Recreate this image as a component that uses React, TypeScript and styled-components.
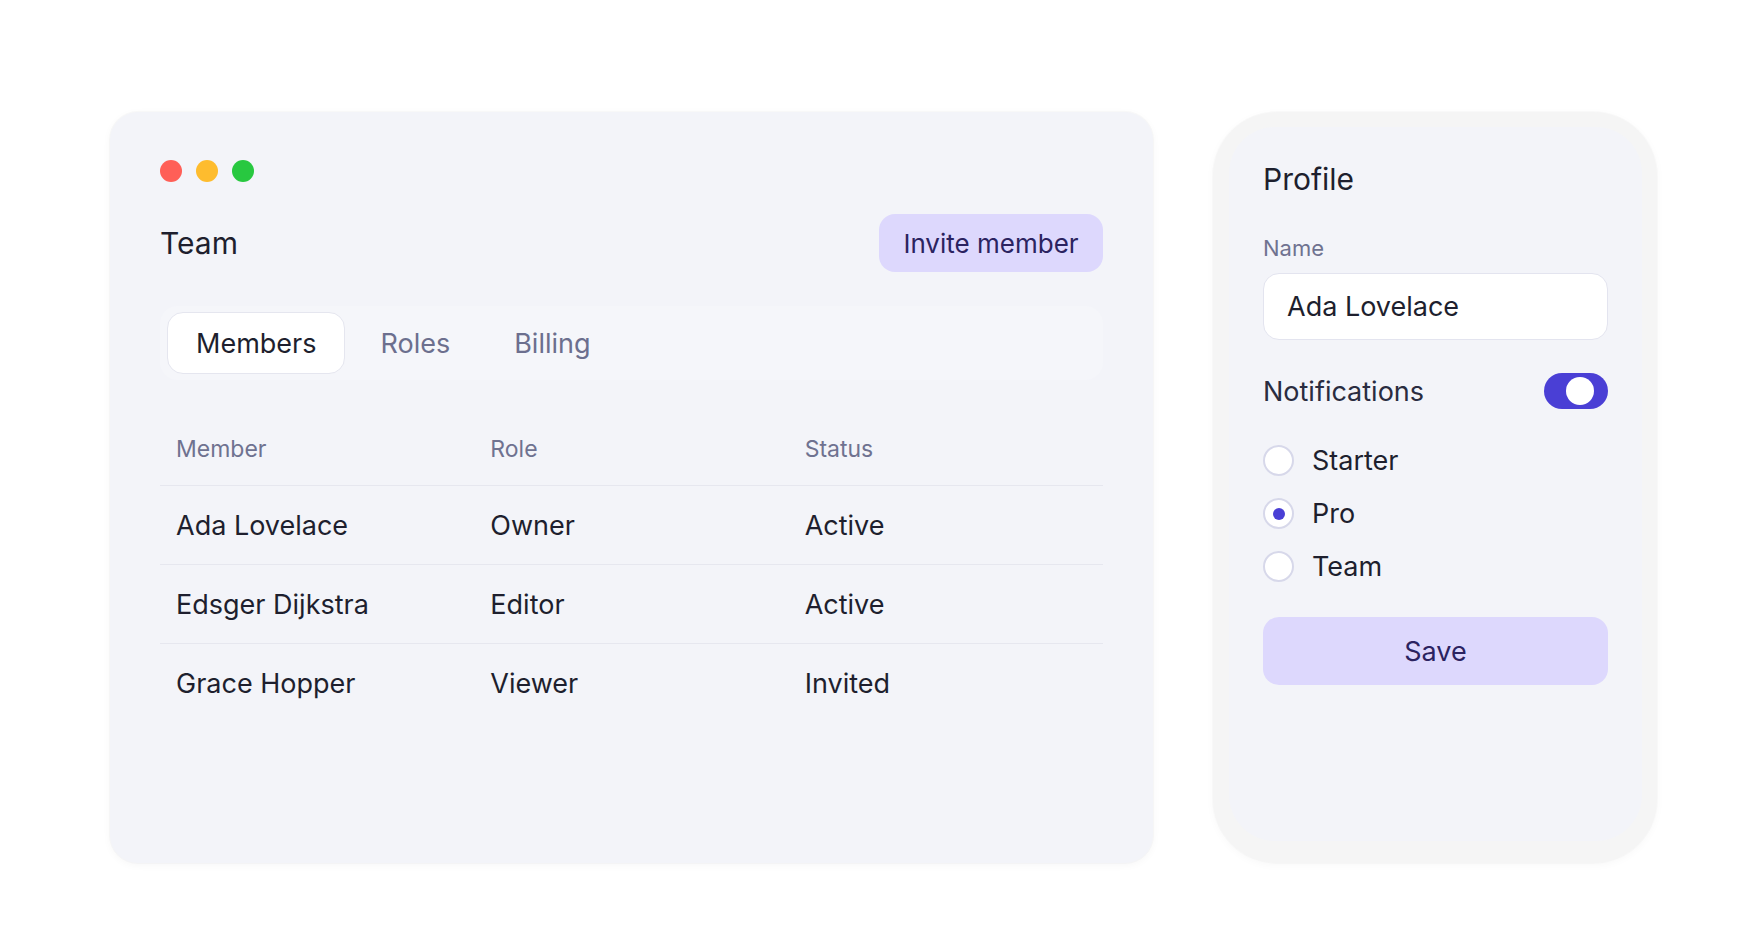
import React from "react";
import styled, { createGlobalStyle } from "styled-components";

const GlobalStyle = createGlobalStyle`
  * { box-sizing: border-box; }
  html, body { margin: 0; padding: 0; background: #ffffff; }
  body {
    font-family: "Inter", "Noto Sans", sans-serif;
    color: #1e1f2e;
    -webkit-font-smoothing: antialiased;
  }
`;

const Page = styled.main`
  display: flex;
  align-items: flex-start;
  gap: 60px;
  width: 1760px;
  height: 940px;
  padding: 112px 0 0 110px;
`;

/* ---------- Team window ---------- */

const TeamCard = styled.section`
  display: flex;
  flex-direction: column;
  flex: none;
  width: 1043px;
  height: 751px;
  padding: 48px 50px 48px 50px;
  background: #f3f4f9;
  border-radius: 28px;
  box-shadow: 0 0 0 1px rgba(30, 30, 60, 0.025), 0 2px 8px rgba(30, 30, 60, 0.04);
`;

const WindowDots = styled.div`
  display: flex;
  gap: 14px;
  height: 22px;
`;

const Dot = styled.span<{ $color: string }>`
  width: 22px;
  height: 22px;
  border-radius: 50%;
  background: ${(p) => p.$color};
`;

const HeaderRow = styled.div`
  display: flex;
  align-items: center;
  justify-content: space-between;
  height: 58px;
  margin-top: 32px;
`;

const Title = styled.h1`
  margin: 0;
  font-size: 30px;
  line-height: 36px;
  font-weight: 400;
  color: #1e1f2e;
`;

const SoftButton = styled.button`
  display: flex;
  align-items: center;
  justify-content: center;
  border: none;
  border-radius: 16px;
  background: #ddd8fd;
  color: #2b2360;
  font-family: inherit;
  font-weight: 400;
  cursor: pointer;
`;

const InviteButton = styled(SoftButton)`
  width: 224px;
  height: 58px;
  font-size: 26px;
`;

const TabBar = styled.div`
  display: flex;
  align-items: center;
  gap: 6px;
  height: 74px;
  margin-top: 34px;
  padding: 0 7px;
  border-radius: 18px;
  background: #f5f6fa;
`;

const Tab = styled.button<{ $active?: boolean }>`
  height: 62px;
  padding: 0 28px;
  border-radius: 16px;
  border: 1px solid ${(p) => (p.$active ? "#e5e6ef" : "transparent")};
  background: ${(p) => (p.$active ? "#ffffff" : "transparent")};
  color: ${(p) => (p.$active ? "#1e1f2e" : "#6c6f8e")};
  font-family: inherit;
  font-size: 27px;
  font-weight: 400;
  cursor: pointer;
`;

const Table = styled.div`
  display: grid;
  grid-template-columns: repeat(3, 1fr);
  margin-top: 32px;
`;

const HeadCell = styled.div`
  display: flex;
  align-items: center;
  height: 74px;
  padding-left: 16px;
  border-bottom: 1px solid #e6e7ef;
  color: #6f7290;
  font-size: 23px;
`;

const Cell = styled.div<{ $last?: boolean }>`
  display: flex;
  align-items: center;
  height: 79px;
  padding-left: 16px;
  border-bottom: 1px solid ${(p) => (p.$last ? "transparent" : "#e6e7ef")};
  color: #1e1f2e;
  font-size: 27px;
`;

/* ---------- Profile phone ---------- */

const Phone = styled.aside`
  display: flex;
  flex: none;
  width: 444px;
  height: 751px;
  padding: 15px 15px 22px 16px;
  background: #f5f5f5;
  border-radius: 64px;
  box-shadow: 0 0 0 1px rgba(30, 30, 30, 0.015), 0 2px 8px rgba(30, 30, 30, 0.03);
`;

const Screen = styled.div`
  display: flex;
  flex-direction: column;
  flex: 1;
  min-width: 0;
  padding: 34px;
  background: #f3f4f9;
  border-radius: 46px;
`;

const FieldLabel = styled.label`
  margin-top: 37px;
  font-size: 22px;
  line-height: 28px;
  color: #6f7290;
`;

const TextInput = styled.input`
  width: 100%;
  min-width: 0;
  height: 67px;
  margin-top: 11px;
  padding: 0 23px;
  border: 1px solid #e3e4ef;
  border-radius: 16px;
  background: #ffffff;
  color: #1e1f2e;
  font-family: inherit;
  font-size: 27px;
  outline: none;
`;

const SettingRow = styled.div`
  display: flex;
  align-items: center;
  justify-content: space-between;
  height: 36px;
  margin-top: 33px;
  font-size: 27px;
  color: #2a2c40;
`;

const Toggle = styled.button<{ $on: boolean }>`
  display: flex;
  align-items: center;
  width: 64px;
  height: 36px;
  padding: 0 0 0 ${(p) => (p.$on ? "22px" : "4px")};
  border: none;
  border-radius: 18px;
  background: ${(p) => (p.$on ? "#4a3fd5" : "#d7d8ea")};
  cursor: pointer;
`;

const Knob = styled.span`
  width: 28px;
  height: 28px;
  border-radius: 50%;
  background: #ffffff;
`;

const RadioList = styled.div`
  display: flex;
  flex-direction: column;
  gap: 22px;
  margin-top: 36px;
`;

const RadioRow = styled.label`
  display: flex;
  align-items: center;
  gap: 18px;
  height: 31px;
  font-size: 27px;
  color: #1e1f2e;
  cursor: pointer;
`;

const RadioCircle = styled.span<{ $checked: boolean }>`
  display: flex;
  align-items: center;
  justify-content: center;
  width: 31px;
  height: 31px;
  border: 2px solid #d7d8ea;
  border-radius: 50%;
  background: #ffffff;

  &::after {
    content: "";
    width: 12px;
    height: 12px;
    border-radius: 50%;
    background: ${(p) => (p.$checked ? "#4a3fd5" : "transparent")};
  }
`;

const SaveButton = styled(SoftButton)`
  height: 68px;
  margin-top: 35px;
  font-size: 27px;
`;

const members = [
  { name: "Ada Lovelace", role: "Owner", status: "Active" },
  { name: "Edsger Dijkstra", role: "Editor", status: "Active" },
  { name: "Grace Hopper", role: "Viewer", status: "Invited" },
];

const plans = ["Starter", "Pro", "Team"];

export default function App() {
  const [tab, setTab] = React.useState("Members");
  const [notify, setNotify] = React.useState(true);
  const [plan, setPlan] = React.useState("Pro");

  return (
    <>
      <GlobalStyle />
      <Page>
        <TeamCard>
          <WindowDots>
            <Dot $color="#ff5f57" />
            <Dot $color="#febc2e" />
            <Dot $color="#28c840" />
          </WindowDots>
          <HeaderRow>
            <Title>Team</Title>
            <InviteButton>Invite member</InviteButton>
          </HeaderRow>
          <TabBar>
            {["Members", "Roles", "Billing"].map((t) => (
              <Tab key={t} $active={tab === t} onClick={() => setTab(t)}>
                {t}
              </Tab>
            ))}
          </TabBar>
          <Table>
            <HeadCell>Member</HeadCell>
            <HeadCell>Role</HeadCell>
            <HeadCell>Status</HeadCell>
            {members.map((m, i) => {
              const last = i === members.length - 1;
              return (
                <React.Fragment key={m.name}>
                  <Cell $last={last}>{m.name}</Cell>
                  <Cell $last={last}>{m.role}</Cell>
                  <Cell $last={last}>{m.status}</Cell>
                </React.Fragment>
              );
            })}
          </Table>
        </TeamCard>

        <Phone>
          <Screen>
            <Title>Profile</Title>
            <FieldLabel htmlFor="profile-name">Name</FieldLabel>
            <TextInput id="profile-name" defaultValue="Ada Lovelace" />
            <SettingRow>
              <span>Notifications</span>
              <Toggle $on={notify} onClick={() => setNotify(!notify)} aria-label="Notifications">
                <Knob />
              </Toggle>
            </SettingRow>
            <RadioList>
              {plans.map((p) => (
                <RadioRow key={p} onClick={() => setPlan(p)}>
                  <RadioCircle $checked={plan === p} />
                  {p}
                </RadioRow>
              ))}
            </RadioList>
            <SaveButton>Save</SaveButton>
          </Screen>
        </Phone>
      </Page>
    </>
  );
}
